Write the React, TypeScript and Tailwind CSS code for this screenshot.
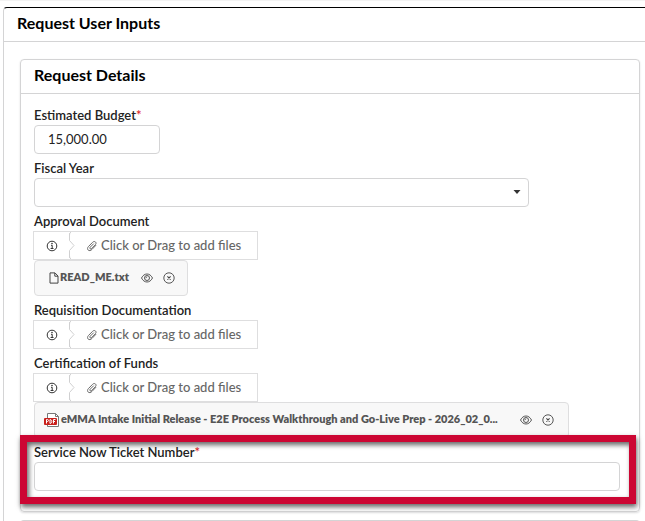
import type { ReactNode } from "react";

function InfoIcon() {
  return (
    <svg className="h-3 w-3" viewBox="0 0 12 12" fill="none" stroke="#333" aria-hidden="true">
      <circle cx="6" cy="6" r="4.8" strokeWidth="1" />
      <path d="M5 5.3h1.2v3M4.6 8.5h2.9" strokeWidth="1" />
      <circle cx="6" cy="3.5" r="0.8" fill="#333" stroke="none" />
    </svg>
  );
}

function ClipIcon() {
  return (
    <svg className="h-3 w-3" viewBox="0 0 12 12" fill="none" stroke="#6a6a6a" strokeLinecap="round" aria-hidden="true">
      <path
        d="M9.8 5.4 6 9.4C4.8 10.7 3.2 11 2.2 10.1S1.4 7.700 2.400 6.600L6.600 2.300C7.400 1.400 8.700 1.300 9.500 2S10.200 3.900 9.400 4.700L5.700 8.500C5.200 9 4.400 9.100 4 8.700S3.700 7.700 4.200 7.200L7.500 3.900"
        strokeWidth="1"
      />
    </svg>
  );
}

function EyeIcon() {
  return (
    <svg className="h-3 w-3" viewBox="0 0 12 12" fill="none" stroke="#444" aria-hidden="true">
      <path d="M.5 6C1.900 3.300 3.800 2 6 2S10.100 3.300 11.500 6C10.100 8.700 8.200 10 6 10S1.900 8.700.5 6z" strokeWidth="0.9" />
      <circle cx="6" cy="6" r="2.500" strokeWidth="0.9" />
      <path d="M4.900 6.200C4.900 5.300 5.400 4.900 6.200 4.900" strokeWidth="0.800" />
    </svg>
  );
}

function RemoveIcon() {
  return (
    <svg className="h-3 w-3" viewBox="0 0 12 12" fill="none" stroke="#444" aria-hidden="true">
      <circle cx="6" cy="6" r="5.200" strokeWidth="0.900" />
      <path d="M4.400 4.400l3.200 3.200M7.600 4.400 4.400 7.600" strokeWidth="1.100" />
    </svg>
  );
}

function FileIcon() {
  return (
    <svg className="h-3 w-2.5" viewBox="0 0 10 12" fill="none" stroke="#444" aria-hidden="true">
      <path d="M1 .9h5L9 4v7.100H1zM5.800 1v3.200H9" strokeWidth="1" strokeLinejoin="round" />
    </svg>
  );
}

function PdfIcon() {
  return (
    <svg className="h-4 w-4" viewBox="0 0 16 16" aria-hidden="true">
      <path d="M3.500 1.500h8l3 3v10h-11z" fill="#fff" stroke="#777" />
      <path d="M11.500 1.500v3h3" fill="none" stroke="#777" />
      <rect x="0" y="6" width="13" height="7" rx="1" fill="#c8201c" />
      <path
        d="M2.500 11.500v-4h1c1.300 0 1.300 2 0 2h-1M6 7.500v4c2.400 0 2.400-4 0-4M9.500 11.500v-4h2M9.500 9.500H11"
        fill="none"
        stroke="#fff"
      />
    </svg>
  );
}

function Required() {
  return <span className="text-[#e02b2b]">*</span>;
}

const labelStyle = "block text-[13px] leading-[19px] font-semibold text-[#222]";
const boxStyle = "block h-[29px] rounded border border-[#d4d4d5] bg-white text-[13px] text-[#222]";

type FileFieldProps = {
  id: string;
  label: string;
  children?: ReactNode;
};

function FileField({ id, label, children }: FileFieldProps) {
  return (
    <div>
      <label htmlFor={id} className={labelStyle}>
        {label}
      </label>
      <div className="-ml-px flex h-[29px] w-[225px] border border-[#dededf] bg-white">
        <button type="button" aria-label={`About ${label}`} className="flex w-[35px] items-center justify-center">
          <InfoIcon />
        </button>
        <svg className="h-[27px] w-1.5" viewBox="0 0 6 27" fill="none" stroke="#d0d0d1" aria-hidden="true">
          <path d="M-1 0Q.5.5.5 3v5.500l4.500 5-4.500 5V24Q.5 26.500-1 27M2 0Q.5.5.5 3M.5 24Q.5 26.500 2 27" />
        </svg>
        <button
          id={id}
          type="button"
          className="flex items-center gap-[3px] pl-[11px] text-[13px] font-medium text-[#666]"
        >
          <ClipIcon />
          Click or Drag to add files
        </button>
      </div>
      {children}
    </div>
  );
}

type AttachmentProps = {
  name: string;
  icon: ReactNode;
  className: string;
};

function Attachment({ name, icon, className }: AttachmentProps) {
  return (
    <div className={`flex h-9 items-center rounded border border-[#dededf] bg-[#f8f8f8] ${className}`}>
      {icon}
      <span className="grow pb-px text-[11px] font-extrabold whitespace-nowrap text-[#555]">{name}</span>
      <button type="button" aria-label={`Preview ${name}`} className="ml-2 shrink-0">
        <EyeIcon />
      </button>
      <button type="button" aria-label={`Remove ${name}`} className="ml-2.5 shrink-0">
        <RemoveIcon />
      </button>
    </div>
  );
}

export default function App() {
  return (
    <main className="overflow-hidden bg-white font-['Lato',sans-serif] text-black">
      <div className="h-px bg-[#f3f3f3]" />
      <section className="mt-1.5 ml-[3px] rounded-tl border-t border-l border-t-black border-l-[#d4d4d5]">
        <h1 className="border-b border-[#d4d4d5] pb-[3px] pl-[13px] text-[16px] leading-[30px] font-bold">
          Request User Inputs
        </h1>

        <div className="pt-[17px] pr-[5px] pl-4">
          <div className="rounded border border-[#d4d4d5] shadow-[0_1px_2px_#22242626]">
            <h2 className="border-b border-[#d4d4d5] pb-[3px] pl-[13px] text-[16px] leading-[30px] font-bold">
              Request Details
            </h2>

            <form className="flex flex-col gap-[5px] pt-3 pr-[19px] pb-5 pl-[13px]">
              <div>
                <label htmlFor="budget" className={labelStyle}>
                  Estimated Budget
                  <Required />
                </label>
                <input id="budget" type="text" defaultValue="15,000.00" className={`${boxStyle} w-[126px] px-[13px] pb-0.5`} />
              </div>

              <div>
                <label htmlFor="fiscal-year" className={labelStyle}>
                  Fiscal Year
                </label>
                <div className="relative w-[495px] max-w-full">
                  <select id="fiscal-year" className={`${boxStyle} w-full appearance-none px-3`}>
                    <option value=""></option>
                  </select>
                  <svg className="pointer-events-none absolute top-3 right-2 h-1 w-2" viewBox="0 0 8 4" aria-hidden="true">
                    <path d="M.5 0h7L4 4z" fill="#333" />
                  </svg>
                </div>
              </div>

              <FileField id="approval" label="Approval Document">
                <Attachment
                  name="READ_ME.txt"
                  icon={<span className="mr-px shrink-0"><FileIcon /></span>}
                  className="w-[154px] pr-3 pl-3.5"
                />
              </FileField>

              <FileField id="requisition" label="Requisition Documentation" />

              <FileField id="certification" label="Certification of Funds">
                <Attachment
                  name="eMMA Intake Initial Release - E2E Process Walkthrough and Go-Live Prep - 2026_02_0..."
                  icon={<span className="mr-px shrink-0"><PdfIcon /></span>}
                  className="w-[535px] max-w-full pr-3.5 pl-[9px]"
                />
              </FileField>

              <div className="relative">
                <label htmlFor="ticket" className={labelStyle}>
                  Service Now Ticket Number
                  <Required />
                </label>
                <input id="ticket" type="text" className={`${boxStyle} w-full px-3`} />
                {/* highlight frame around the field that needs attention */}
                <div className="pointer-events-none absolute -top-2 -right-4 -bottom-[13px] -left-3.5 border-[7px] border-[#cc0633] shadow-[1px_3px_5px_#00000099,inset_2px_3px_5px_#00000099]" />
              </div>
            </form>
          </div>

          <div className="mt-2 h-4 rounded-t border border-b-0 border-[#d4d4d5]" />
        </div>
      </section>
    </main>
  );
}
